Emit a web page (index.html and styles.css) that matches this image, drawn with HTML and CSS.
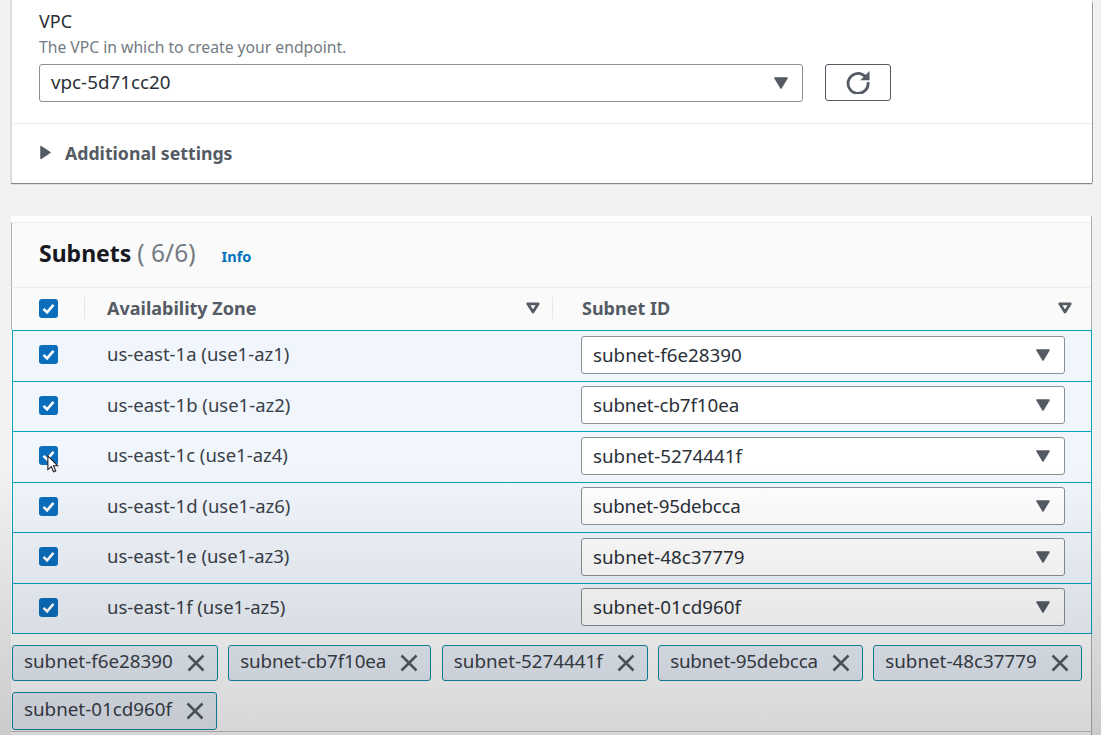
FILE: index.html
```html
<!DOCTYPE html>
<html lang="en">
<head>
<meta charset="utf-8">
<title>Create endpoint</title>
<link rel="stylesheet" href="styles.css">
</head>
<body>
<svg class="defs" width="0" height="0" aria-hidden="true">
  <symbol id="caret" viewBox="0 0 14 12"><path d="M1 1h12L7 11z" fill="#545b64" stroke="#545b64" stroke-width="1.5" stroke-linejoin="round"/></symbol>
  <symbol id="sort" viewBox="0 0 14 12"><path d="M1.800 1.800h10.400L7 10z" fill="none" stroke="#545b64" stroke-width="2.800" stroke-linejoin="round"/></symbol>
  <symbol id="check" viewBox="0 0 19 19"><rect width="19" height="19" rx="3" fill="#0a6ebd"/><path d="M4.5 9.8l3.6 3.6 6.4-7.6" fill="none" stroke="#fff" stroke-width="2.6"/></symbol>
  <symbol id="x" viewBox="0 0 18 18"><path d="M1.5 1.5l15 15M16.5 1.500l-15 15" fill="none" stroke="#545b64" stroke-width="2.500"/></symbol>
</svg>
<main class="page">
  <section class="card top-card">
    <div class="field">
      <div class="label">VPC</div>
      <div class="hint">The VPC in which to create your endpoint.</div>
      <div class="vpc-row">
        <div class="select vpc-select"><span>vpc-5d71cc20</span><svg class="caret"><use href="#caret"/></svg></div>
        <button class="refresh" type="button" aria-label="Refresh">
          <svg class="refresh-icon" width="24" height="24" viewBox="0 0 24 24"><path d="M19.300 6.500A10 10 0 1 0 22 12" fill="none" stroke="#545b64" stroke-width="2.800"/><path d="M23.500 1v9.200h-9.200z" fill="#545b64"/></svg>
        </button>
      </div>
    </div>
    <div class="additional">
      <svg class="tri" width="11" height="15" viewBox="0 0 11 15"><path d="M1 1.500v12l9-6z" fill="#545b64" stroke="#545b64" stroke-width="1.500" stroke-linejoin="round"/></svg>
      <span>Additional settings</span>
    </div>
  </section>

  <section class="card subnets-card">
    <header class="subnets-head">
      <h2>Subnets <span class="count">( 6/6)</span></h2>
      <a class="info">Info</a>
    </header>
    <div class="col-head">
      <div class="c-check"><svg class="cb"><use href="#check"/></svg></div>
      <div class="c-az"><span>Availability Zone</span><svg class="sort"><use href="#sort"/></svg></div>
      <div class="c-id"><span>Subnet ID</span><svg class="sort"><use href="#sort"/></svg></div>
    </div>
    <div class="rows">
      <div class="row"><div class="c-check"><svg class="cb"><use href="#check"/></svg></div><div class="az">us-east-1a (use1-az1)</div><div class="select"><span>subnet-f6e28390</span><svg class="caret"><use href="#caret"/></svg></div></div>
      <div class="row"><div class="c-check"><svg class="cb"><use href="#check"/></svg></div><div class="az">us-east-1b (use1-az2)</div><div class="select"><span class="tight-sm">subnet-cb7f10ea</span><svg class="caret"><use href="#caret"/></svg></div></div>
      <div class="row"><div class="c-check"><svg class="cb"><use href="#check"/></svg>
        <svg class="cursor" width="12" height="19" viewBox="0 0 14 22"><path d="M1 1v16l4-3.500 2.600 6 2.600-1.100-2.600-5.900h5z" fill="#fff" stroke="#222" stroke-width="1.300"/></svg>
      </div><div class="az">us-east-1c (use1-az4)</div><div class="select"><span>subnet-5274441f</span><svg class="caret"><use href="#caret"/></svg></div></div>
      <div class="row"><div class="c-check"><svg class="cb"><use href="#check"/></svg></div><div class="az">us-east-1d (use1-az6)</div><div class="select"><span class="tight">subnet-95debcca</span><svg class="caret"><use href="#caret"/></svg></div></div>
      <div class="row"><div class="c-check"><svg class="cb"><use href="#check"/></svg></div><div class="az">us-east-1e (use1-az3)</div><div class="select"><span>subnet-48c37779</span><svg class="caret"><use href="#caret"/></svg></div></div>
      <div class="row"><div class="c-check"><svg class="cb"><use href="#check"/></svg></div><div class="az">us-east-1f (use1-az5)</div><div class="select"><span>subnet-01cd960f</span><svg class="caret"><use href="#caret"/></svg></div></div>
    </div>
    <div class="tokens">
      <div class="token"><span>subnet-f6e28390</span><svg class="x"><use href="#x"/></svg></div>
      <div class="token"><span class="tight-sm">subnet-cb7f10ea</span><svg class="x"><use href="#x"/></svg></div>
      <div class="token"><span>subnet-5274441f</span><svg class="x"><use href="#x"/></svg></div>
      <div class="token"><span class="tight">subnet-95debcca</span><svg class="x"><use href="#x"/></svg></div>
      <div class="token"><span>subnet-48c37779</span><svg class="x"><use href="#x"/></svg></div>
      <div class="token"><span>subnet-01cd960f</span><svg class="x"><use href="#x"/></svg></div>
    </div>
  </section>
</main>
<div class="video-shade"></div>
</body>
</html>
```
FILE: styles.css
```css
* { box-sizing: border-box; }
html, body { height: 100%; }
body {
  margin: 0;
  background: #f2f2f2;
  font-family: "Noto Sans", "Open Sans", sans-serif;
  color: #16191f;
  overflow: hidden;
}
.defs { position: absolute; }
.page { height: 735px; overflow: hidden; padding: 0 9px 0 11px; display: flex; flex-direction: column; gap: 33px; }
.card { background: #fff; }
.top-card { height: 183px; flex: none; box-shadow: 0 1px 1px 0 rgba(0,0,0,.45), inset 1px 0 0 #d8d8d8, 1px 0 1px -0.500px rgba(0,0,0,.3); display: flex; flex-direction: column; }
.field { height: 124px; padding: 8px 0 0 28px; border-bottom: 1px solid #eaeded; }
.label { font-size: 18px; line-height: 26px; color: #2b3038; }
.hint { font-size: 15.700px; line-height: 20px; margin-top: 3px; color: #737b83; }
.vpc-row { display: flex; align-items: flex-start; gap: 22px; margin-top: 7px; }
.select {
  display: flex; align-items: center; justify-content: space-between;
  height: 38px; width: 484px; padding: 0 14px 0 11px; flex: none;
  background: #fff; border: 1px solid #879196; border-radius: 3px;
  font-size: 18.800px; color: #2b3038;
}
.vpc-select { width: 764px; padding-bottom: 2px; }
.caret { width: 14px; height: 12px; }
.vpc-select .caret { margin-top: 2px; }
.refresh { width: 66px; height: 37px; padding: 0 0 2px; background: #fff; border: 1px solid #545b64; border-radius: 3px; display: flex; align-items: center; justify-content: center; }
.additional { flex: 1; display: flex; align-items: center; padding: 0 0 2px 29px; gap: 14px; font-size: 17.700px; font-weight: 700; color: #545b64; }
.subnets-card { position: relative; flex: 1; padding-top: 6px; border-right: 1px solid #aab0b5; }
.subnets-head {
  height: 66px; background: #fafafa; border-top: 1px solid #eaeded; border-bottom: 1px solid #eaeded; border-left: 1px solid #aab7b8;
  display: flex; align-items: center; padding: 0 0 2px 27px; gap: 26px;
}
h2 { margin: 0 0 3px; font-size: 23px; font-weight: 700; color: #16191f; }
.count { font-size: 24.500px; font-weight: 400; color: #737b83; }
.info { font-size: 14.500px; font-weight: 700; color: #0073bb; margin-top: 4px; }
.col-head { height: 42px; padding-bottom: 2px; background: #fafafa; display: flex; align-items: center; font-size: 18px; font-weight: 700; color: #545b64; border-left: 1px solid #aab7b8; }
.c-check { position: relative; width: 72px; height: 19px; padding-left: 27px; display: flex; flex: none; }
.cb { width: 19px; height: 19px; flex: none; }
.c-az { position: relative; width: 468px; padding: 0 12px 0 23px; display: flex; justify-content: space-between; align-items: center; }
.c-az::before, .c-id::before { content: ""; position: absolute; left: 0; top: 1px; height: 22px; width: 1px; background: #e4e7e8; }
.c-id { position: relative; flex: 1; padding: 0 19px 0 30px; display: flex; justify-content: space-between; align-items: center; }
.sort { width: 14px; height: 12px; }
.rows { display: grid; grid-auto-rows: 50.500px; margin-left: 1px; margin-right: -1px; }
.row { display: flex; align-items: center; padding: 0 26px 2px 0; background: #f1f6fd; border: 1px solid #0aa3bd; border-left-width: 1.500px; margin-bottom: -1px; color: #3a4149; }
.row .c-check { width: 94px; padding-left: 26px; }
.az { flex: 1; font-size: 18.500px; padding-bottom: 2px; }
.cursor { position: absolute; left: 34px; top: 9px; }
.tokens { display: flex; flex-wrap: wrap; gap: 11px 10.500px; padding: 12px 0 1px 1px; height: 99px; border-bottom: 1px solid #c4c4c4; }
.token {
  display: flex; align-items: center; height: 36px; padding: 0 12px 4px 11px; gap: 14px;
  background: #e9eff8; border: 1px solid #0f8aa6; border-radius: 3px;
  font-size: 18.800px; color: #3a4149;
}
.token:last-child { height: 38px; }
.tight { letter-spacing: -.22px; }
.tight-sm { letter-spacing: -.1px; }
.x { width: 18px; height: 18px; flex: none; margin-top: 3px; }
.video-shade {
  position: absolute; left: 0; right: 0; top: 465px; bottom: 0; pointer-events: none;
  background: linear-gradient(rgba(0,0,0,0), rgba(0,0,0,.16));
}
```
